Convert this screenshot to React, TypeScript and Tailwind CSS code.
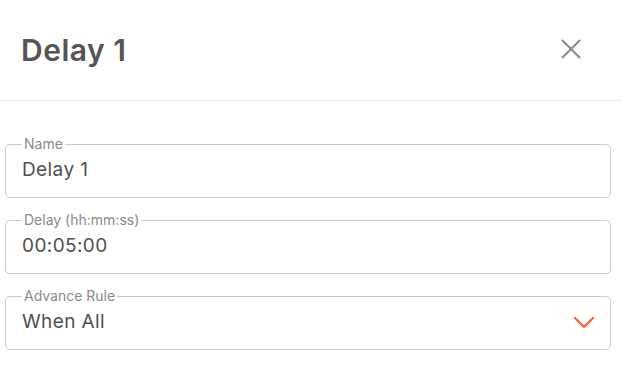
import React from 'react';

function Field({ label, value, select }: { label: string; value: string; select?: boolean }) {
  return (
    <fieldset className="h-[61px] rounded-[5px] border border-[#c9c9d1] pl-[16px] pr-[16px]">
      <legend className="px-[2px] text-[14px] leading-[14px] text-[#8a8a8a]">{label}</legend>
      <div className="flex items-center justify-between pt-[7px]">
        <span className="text-[19px] leading-[24px] tracking-[0.4px] text-[#505050]">{value}</span>
        {select && (
          <svg width="22" height="14" viewBox="0 0 22 14" className="mr-[-1px] mt-[2px]">
            <path d="M2 2 L11 11 L20 2" fill="none" stroke="#f0683a" strokeWidth="2.4" strokeLinecap="round" strokeLinejoin="round" />
          </svg>
        )}
      </div>
    </fieldset>
  );
}

export default function App() {
  return (
    <div className="h-[381px] w-[621px] bg-white" style={{ fontFamily: 'Inter, "Noto Sans", sans-serif' }}>
      <div className="flex h-[101px] items-center justify-between border-b border-[#e6e8ee] pl-[21px] pr-[40px]">
        <h1 className="text-[30px] leading-[36px] tracking-[0.5px] font-semibold text-[#555555]">Delay 1</h1>
        <svg width="20" height="20" viewBox="0 0 20 20" className="mb-[3px]">
          <path d="M1.5 1.5 L18.5 18.5 M18.5 1.5 L1.5 18.5" stroke="#8a8a8e" strokeWidth="2" strokeLinecap="round" />
        </svg>
      </div>
      <div className="ml-[5px] mr-[10px] flex flex-col gap-[15px] pt-[36px]">
        <Field label="Name" value="Delay 1" />
        <Field label="Delay (hh:mm:ss)" value="00:05:00" />
        <Field label="Advance Rule" value="When All" select />
      </div>
    </div>
  );
}
